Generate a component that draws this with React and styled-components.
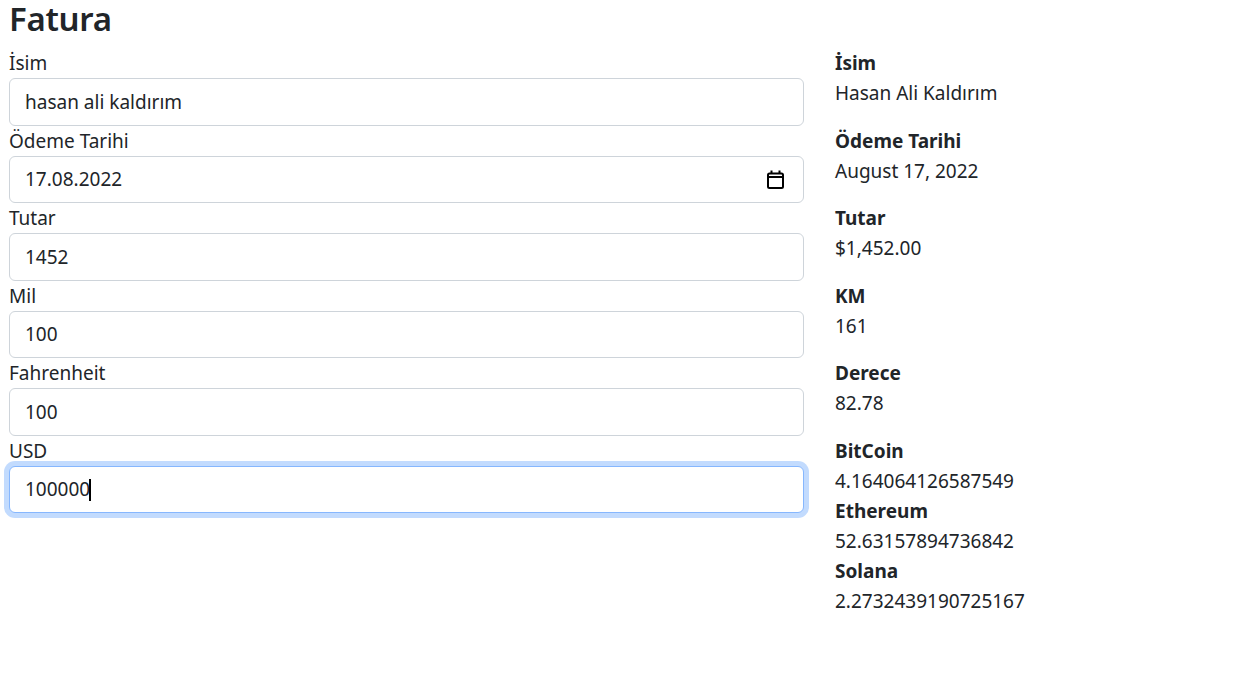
import React, { useEffect, useRef } from 'react';
import styled, { createGlobalStyle } from 'styled-components';

const GlobalStyle = createGlobalStyle`
  body {
    margin: 0;
    background: #fff;
    color: #212529;
    font-family: "Noto Sans", "Open Sans", sans-serif;
  }
  * { box-sizing: border-box; }
`;

const Page = styled.div`
  padding: 0 8px 0 9px;
`;

const Title = styled.h2`
  margin: 0 0 10px;
  font-size: 33px;
  font-weight: 600;
  line-height: 38px;
  letter-spacing: -0.3px;
`;

const Layout = styled.div`
  display: grid;
  grid-template-columns: 795px 1fr;
  column-gap: 31px;
`;

const Form = styled.div`
  display: flex;
  flex-direction: column;
`;

const Label = styled.label`
  display: block;
  font-size: 19px;
  line-height: 30px;
`;

const Field = styled.div`
  position: relative;
`;

const Input = styled.input`
  display: block;
  width: 100%;
  height: 47.5px;
  padding: 0 15px;
  font-family: inherit;
  font-size: 19px;
  color: #212529;
  background: #fff;
  border: 1px solid ${p => (p.$focused ? '#86b7fe' : '#ced4da')};
  border-radius: 6px;
  outline: none;
  box-shadow: ${p => (p.$focused ? '0 0 0 5px rgba(13, 110, 253, 0.25)' : 'none')};
  caret-color: transparent;
`;

const Caret = styled.span`
  position: absolute;
  left: 80px;
  top: 13px;
  width: 2px;
  height: 22px;
  background: #000;
  pointer-events: none;
`;

const CalendarIcon = styled.svg`
  position: absolute;
  right: 20px;
  top: 14px;
  width: 17px;
  height: 19px;
  pointer-events: none;
`;

const Summary = styled.div`
  display: flex;
  flex-direction: column;
`;

const Group = styled.div`
  margin-bottom: ${p => (p.$tight ? '0' : '17.5px')};
`;

const Key = styled.div`
  font-size: 19px;
  font-weight: 700;
  line-height: 30px;
`;

const Value = styled.div`
  font-size: 19px;
  line-height: 30px;
`;

const fields = [
  { label: 'İsim', value: 'hasan ali kaldırım' },
  { label: 'Ödeme Tarihi', value: '17.08.2022', date: true },
  { label: 'Tutar', value: '1452' },
  { label: 'Mil', value: '100' },
  { label: 'Fahrenheit', value: '100' },
  { label: 'USD', value: '100000', focused: true },
];

const summary = [
  { key: 'İsim', value: 'Hasan Ali Kaldırım' },
  { key: 'Ödeme Tarihi', value: 'August 17, 2022' },
  { key: 'Tutar', value: '$1,452.00' },
  { key: 'KM', value: '161' },
  { key: 'Derece', value: '82.78' },
  { key: 'BitCoin', value: '4.164064126587549', tight: true },
  { key: 'Ethereum', value: '52.63157894736842', tight: true },
  { key: 'Solana', value: '2.2732439190725167', tight: true },
];

const FormField = ({ field }) => {
  const ref = useRef(null);

  useEffect(() => {
    if (field.focused && ref.current) {
      const el = ref.current;
      el.focus();
      el.setSelectionRange(el.value.length, el.value.length);
    }
  }, [field.focused]);

  return (
    <>
      <Label>{field.label}</Label>
      <Field>
        <Input ref={ref} defaultValue={field.value} $focused={field.focused} />
        {field.focused && <Caret />}
        {field.date && (
          <CalendarIcon viewBox="0 0 17 19" fill="none" stroke="#000">
            <rect x="1" y="3.5" width="15" height="14.5" rx="1.5" strokeWidth="2" />
            <line x1="1" y1="7" x2="16" y2="7" strokeWidth="2" />
            <line x1="4.5" y1="0.5" x2="4.5" y2="4" strokeWidth="2" />
            <line x1="12.5" y1="0.5" x2="12.5" y2="4" strokeWidth="2" />
          </CalendarIcon>
        )}
      </Field>
    </>
  );
};

const App = () => (
  <>
    <GlobalStyle />
    <Page>
      <Title>Fatura</Title>
      <Layout>
        <Form>
          {fields.map(f => (
            <FormField key={f.label} field={f} />
          ))}
        </Form>
        <Summary>
          {summary.map(s => (
            <Group key={s.key} $tight={s.tight}>
              <Key>{s.key}</Key>
              <Value>{s.value}</Value>
            </Group>
          ))}
        </Summary>
      </Layout>
    </Page>
  </>
);

export default App;
